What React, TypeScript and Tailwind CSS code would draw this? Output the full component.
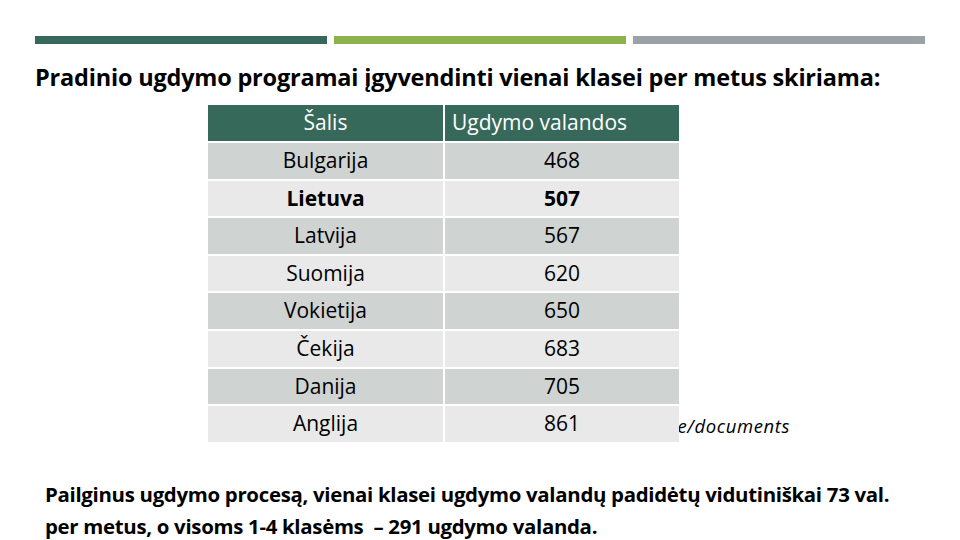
import React from "react";

const rows: [string, string, boolean][] = [
  ["Bulgarija", "468", false],
  ["Lietuva", "507", true],
  ["Latvija", "567", false],
  ["Suomija", "620", false],
  ["Vokietija", "650", false],
  ["Čekija", "683", false],
  ["Danija", "705", false],
  ["Anglija", "861", false],
];

export default function App() {
  return (
    <div
      className="relative w-[960px] h-[540px] bg-white overflow-hidden text-black"
      style={{ fontFamily: "'Open Sans', Lato, sans-serif" }}
    >
      <div className="flex gap-[7px] pl-[35px] pt-[36px]">
        <div className="w-[292px] h-[8px] bg-[#37695a]" />
        <div className="w-[292px] h-[8px] bg-[#8db34e]" />
        <div className="w-[292px] h-[8px] bg-[#9aa1a7]" />
      </div>
      <h1 className="pl-[35px] mt-[19px] text-[23.5px] leading-[28px] font-bold tracking-[-0.2px]">
        Pradinio ugdymo programai įgyvendinti vienai klasei per metus skiriama:
      </h1>
      <div className="relative mt-[14px] ml-[208px] w-[471px]">
        <span className="absolute left-[0px] w-[582px] top-[309px] text-right italic text-[18.5px] leading-[24px] tracking-[0.6px] z-0">
          eurydice/documents
        </span>
        <div className="relative z-10 flex flex-col gap-[2px] bg-white">
          <div className="flex gap-[2px] h-[36px] bg-white text-white text-[21px]">
            <div className="w-[235px] bg-[#37695a] flex items-center justify-center">Šalis</div>
            <div className="w-[234px] bg-[#37695a] flex items-center pl-[7px]">Ugdymo valandos</div>
          </div>
          {rows.map(([c, v, b], i) => (
            <div
              key={c}
              className={`flex gap-[2px] h-[35.6px] text-[21px] ${b ? "font-bold" : ""}`}
            >
              <div className={`w-[235px] flex items-center justify-center ${i % 2 === 0 ? "bg-[#cfd3d1]" : "bg-[#e8e9e8]"}`}>{c}</div>
              <div className={`w-[234px] flex items-center justify-center ${i % 2 === 0 ? "bg-[#cfd3d1]" : "bg-[#e8e9e8]"}`}>{v}</div>
            </div>
          ))}
        </div>
      </div>
      <div className="pl-[45px] mt-[35px] text-[20.4px] font-bold tracking-[-0.3px]">
        <div className="leading-[34px]">
          Pailginus ugdymo procesą, vienai klasei ugdymo valandų padidėtų vidutiniškai 73 val.
        </div>
        <div className="leading-[30px]">per metus, o visoms 1-4 klasėms&nbsp; – 291 ugdymo valanda.</div>
      </div>
    </div>
  );
}
